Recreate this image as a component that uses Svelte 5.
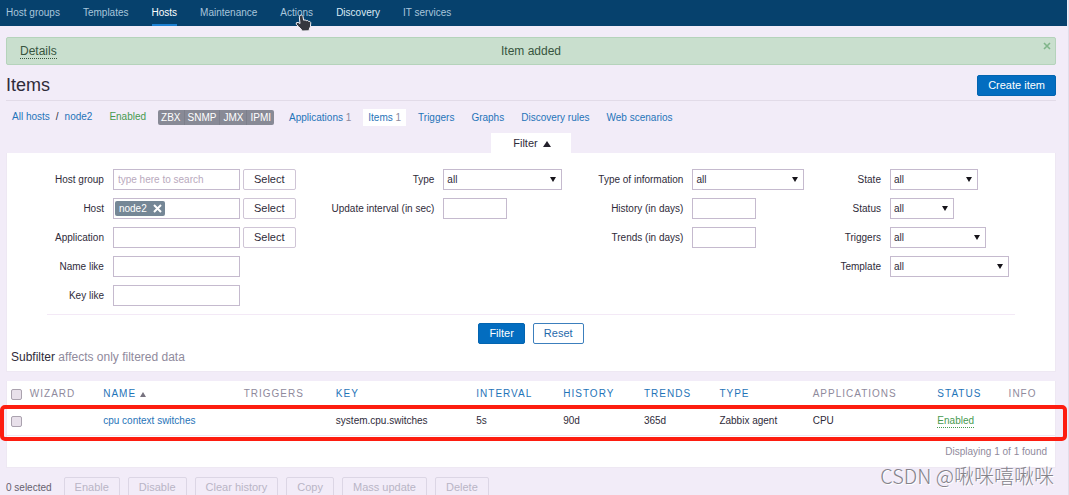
<script lang="ts">
	interface Field {
		id: string;
		label: string;
		type: 'text' | 'select';
		size: string;
		placeholder?: string;
		picker?: boolean;
		tag?: string;
	}

	interface Column {
		label: string;
		width: number;
		sortable?: boolean;
	}

	const menu = ['Host groups', 'Templates', 'Hosts', 'Maintenance', 'Actions', 'Discovery', 'IT services'];
	const interfaces = ['ZBX', 'SNMP', 'JMX', 'IPMI'];

	const tabs = [
		{ label: 'Applications', count: 1 },
		{ label: 'Items', count: 1 },
		{ label: 'Triggers' },
		{ label: 'Graphs' },
		{ label: 'Discovery rules' },
		{ label: 'Web scenarios' }
	];

	const filterColumns: Field[][] = [
		[
			{ id: 'group', label: 'Host group', type: 'text', size: 'wide', placeholder: 'type here to search', picker: true },
			{ id: 'host', label: 'Host', type: 'text', size: 'wide', picker: true, tag: 'node2' },
			{ id: 'application', label: 'Application', type: 'text', size: 'wide', picker: true },
			{ id: 'name', label: 'Name like', type: 'text', size: 'wide' },
			{ id: 'key', label: 'Key like', type: 'text', size: 'wide' }
		],
		[
			{ id: 'type', label: 'Type', type: 'select', size: 'xl' },
			{ id: 'interval', label: 'Update interval (in sec)', type: 'text', size: 'small' }
		],
		[
			{ id: 'value-type', label: 'Type of information', type: 'select', size: 'lg' },
			{ id: 'history', label: 'History (in days)', type: 'text', size: 'small' },
			{ id: 'trends', label: 'Trends (in days)', type: 'text', size: 'small' }
		],
		[
			{ id: 'state', label: 'State', type: 'select', size: 'sm' },
			{ id: 'status', label: 'Status', type: 'select', size: 'small' },
			{ id: 'triggers', label: 'Triggers', type: 'select', size: 'md' },
			{ id: 'template', label: 'Template', type: 'select', size: 'xl' }
		]
	];

	// widths in percent of the table
	const columns: Column[] = [
		{ label: 'Wizard', width: 7 },
		{ label: 'Name', width: 13.4, sortable: true },
		{ label: 'Triggers', width: 8.8 },
		{ label: 'Key', width: 13.4, sortable: true },
		{ label: 'Interval', width: 8.3, sortable: true },
		{ label: 'History', width: 7.7, sortable: true },
		{ label: 'Trends', width: 7.2, sortable: true },
		{ label: 'Type', width: 8.9, sortable: true },
		{ label: 'Applications', width: 11.9 },
		{ label: 'Status', width: 6.8, sortable: true },
		{ label: 'Info', width: 4.8 }
	];

	const items = [
		{
			name: 'cpu context switches',
			key: 'system.cpu.switches',
			interval: '5s',
			history: '90d',
			trends: '365d',
			type: 'Zabbix agent',
			applications: 'CPU',
			status: 'Enabled'
		}
	];

	const actions = ['Enable', 'Disable', 'Clear history', 'Copy', 'Mass update', 'Delete'];

	let selected = $state(items.map(() => false));
	let selectedCount = $derived(selected.filter(Boolean).length);
	let messageOpen = $state(true);
	let filterOpen = $state(true);

	function toggleAll(event: Event) {
		const checked = (event.currentTarget as HTMLInputElement).checked;
		selected = items.map(() => checked);
	}
</script>

<div class="page">
	<nav class="menu">
		{#each menu as entry}
			<a href="#top" class:active={entry === 'Hosts'} class:hover={entry === 'Discovery'}>
				{entry}
				{#if entry === 'Actions'}
					<svg class="pointer" width="17" height="18" viewBox="0 0 17 18" aria-hidden="true">
						<path
							d="M5.5 1.2c1.3-.5 2.3.2 2.5 1.4l.6 3.6 1.5-.3 1.1.7 1.5-.1.8.8 1.3.1 1 1.3-.4 4.1-1.1 2.2-.2 1.8-7.2.2-.4-1.5-3.2-3.1-2.1-2.2.2-1.5 1.7-.3 1.9 1.1-.7-6.7z"
							fill="#35373f"
							stroke="#f2f0f6"
							stroke-width="1"
							stroke-linejoin="round"
						/>
					</svg>
				{/if}
			</a>
		{/each}
	</nav>

	<main>
		{#if messageOpen}
			<div class="message" role="status">
				<a href="#details" class="dotted">Details</a>
				<span>Item added</span>
				<button type="button" class="close" aria-label="Close" onclick={() => (messageOpen = false)}>
					<svg width="8" height="8" viewBox="0 0 8 8"><path d="M1 1l6 6M7 1l-6 6" stroke="currentColor" stroke-width="1.6" /></svg>
				</button>
			</div>
		{/if}

		<header>
			<h1>Items</h1>
			<button type="button" class="btn primary">Create item</button>
		</header>

		<div class="crumbs">
			<span class="path"><a href="#hosts">All hosts</a><span>/</span><a href="#node2">node2</a></span>
			<span class="enabled">Enabled</span>
			<span class="interfaces">
				{#each interfaces as name}
					<span>{name}</span>
				{/each}
			</span>
			{#each tabs as tab}
				<span class="tab" class:current={tab.label === 'Items'}>
					<a href="#{tab.label}">{tab.label}</a>{#if tab.count}&nbsp;{tab.count}{/if}
				</span>
			{/each}
		</div>

		<div class="filter-tab">
			<button type="button" aria-expanded={filterOpen} onclick={() => (filterOpen = !filterOpen)}>
				Filter <span class="up"></span>
			</button>
		</div>

		<section class="panel filter">
			{#if filterOpen}
				<form onsubmit={(e) => e.preventDefault()}>
					<div class="fields">
						{#each filterColumns as column}
							<div class="column">
								{#each column as field}
									<label for={field.id}>{field.label}</label>
									<div class="control">
										{#if field.type === 'select'}
											<span class="select {field.size}">
												<select id={field.id}><option>all</option></select>
											</span>
										{:else}
											<span class="box {field.size}">
												{#if field.tag}
													<span class="tag">
														{field.tag}
														<button type="button" aria-label="Remove {field.tag}">
															<svg width="9" height="9" viewBox="0 0 9 9"><path d="M1 1l7 7M8 1L1 8" stroke="currentColor" stroke-width="2" /></svg>
														</button>
													</span>
												{/if}
												<input id={field.id} type="text" placeholder={field.placeholder} />
											</span>
										{/if}
										{#if field.picker}
											<button type="button" class="btn plain">Select</button>
										{/if}
									</div>
								{/each}
							</div>
						{/each}
					</div>
					<div class="submit">
						<button type="submit" class="btn primary">Filter</button>
						<button type="reset" class="btn">Reset</button>
					</div>
				</form>
			{/if}
			<p class="subfilter">Subfilter <span>affects only filtered data</span></p>
		</section>

		<section class="panel list">
			<table>
				<colgroup>
					<col style="width: 1.8%" />
					{#each columns as column}
						<col style="width: {column.width}%" />
					{/each}
				</colgroup>
				<thead>
					<tr>
						<th><input type="checkbox" aria-label="Select all" onchange={toggleAll} /></th>
						{#each columns as column}
							<th>
								{#if column.sortable}
									<a href="#sort">{column.label}</a>
								{:else}
									{column.label}
								{/if}
								{#if column.label === 'Name'}<span class="up"></span>{/if}
							</th>
						{/each}
					</tr>
				</thead>
				<tbody>
					{#each items as item, index}
						<tr>
							<td><input type="checkbox" aria-label={item.name} bind:checked={selected[index]} /></td>
							<td></td>
							<td><a href="#item">{item.name}</a></td>
							<td></td>
							<td>{item.key}</td>
							<td>{item.interval}</td>
							<td>{item.history}</td>
							<td>{item.trends}</td>
							<td>{item.type}</td>
							<td>{item.applications}</td>
							<td><a href="#status" class="enabled dotted">{item.status}</a></td>
							<td></td>
						</tr>
					{/each}
				</tbody>
			</table>
			<div class="total">Displaying {items.length} of {items.length} found</div>
			<div class="marker"></div>
		</section>

		<footer>
			<span class="count">{selectedCount} selected</span>
			{#each actions as action}
				<button type="button" class="btn" disabled={selectedCount === 0}>{action}</button>
			{/each}
			<span class="watermark">CSDN @啾咪嘻啾咪</span>
		</footer>
	</main>
</div>

<style>
	:global(body) {
		margin: 0;
		background: #f2ecf8;
	}

	.page {
		box-sizing: border-box;
		height: 100vh;
		overflow: hidden;
		border-right: 1px solid #e2dde9;
		background: #f2ecf8;
		color: #2f2b3a;
		font: 10px/16px 'Liberation Sans', Arial, sans-serif;
	}

	a {
		color: #1f74b8;
		text-decoration: none;
	}

	button,
	input,
	select {
		box-sizing: border-box;
		margin: 0;
		font: inherit;
		color: inherit;
	}

	/* Top menu */
	.menu {
		display: flex;
		gap: 23px;
		height: 26px;
		margin-right: 1px;
		padding-left: 6px;
		background: #06416d;
	}

	.menu a {
		position: relative;
		box-sizing: border-box;
		height: 26px;
		border-bottom: 2px solid transparent;
		line-height: 26px;
		color: #a9c6dc;
	}

	.menu a.active {
		border-color: #1c80d2;
		color: #fff;
	}

	.menu a.hover {
		color: #dcebf5;
	}

	.pointer {
		position: absolute;
		top: 14px;
		left: 15px;
	}

	main {
		padding: 11px 12px 0 6px;
	}

	/* Message */
	.message {
		position: relative;
		box-sizing: border-box;
		display: grid;
		grid-template-columns: 1fr auto 1fr;
		align-items: center;
		justify-items: start;
		height: 28px;
		padding: 0 13px;
		border: 1px solid #b5d3bb;
		border-radius: 2px;
		background: #c9dfce;
		color: #38553f;
		font-size: 12px;
		line-height: 14px;
	}

	.message a {
		color: inherit;
	}

	.dotted {
		border-bottom: 1px dotted currentColor;
	}

	.close {
		position: absolute;
		top: 4px;
		right: 4px;
		display: flex;
		padding: 0;
		border: 0;
		background: none;
		color: #80b58a;
	}

	/* Title */
	header {
		display: flex;
		align-items: center;
		justify-content: space-between;
		padding: 10px 0 4px;
		border-bottom: 1px solid #e2dbe8;
	}

	h1 {
		margin: 0;
		font-size: 18px;
		font-weight: normal;
		line-height: 21px;
	}

	.btn {
		height: 21px;
		padding: 0 10px;
		border: 1px solid #3c7fbd;
		border-radius: 2px;
		background: #fff;
		color: #1f69ab;
		font-size: 11px;
		line-height: 19px;
	}

	.btn.primary {
		border-color: #0364b0;
		background: #036dc0;
		color: #fff;
	}

	.btn.plain {
		border-color: #cfc5d6;
		color: #2f2b3a;
	}

	.btn:disabled {
		border-color: #dcd6e5;
		background: transparent;
		color: #b9b5c6;
	}

	/* Host navigation */
	.crumbs {
		display: flex;
		align-items: center;
		gap: 7px;
		height: 18px;
		padding: 7px 1px;
	}

	.path,
	.crumbs > .enabled {
		padding: 0 5px;
	}

	.path span {
		padding: 0 6px;
	}

	.enabled {
		color: #479a4f;
	}

	.interfaces {
		display: flex;
		overflow: hidden;
		margin-right: 3px;
		border-radius: 2px;
		background: #888a96;
		color: #fff;
		line-height: 15px;
	}

	.interfaces span {
		padding: 0 3px;
	}

	.interfaces span + span {
		border-left: 1px solid #7d7f8b;
	}

	.tab {
		padding: 0 5px;
		line-height: 17px;
		color: #8f8a9c;
	}

	.tab.current {
		background: #fff;
	}

	/* Filter */
	.filter-tab {
		display: flex;
		justify-content: center;
	}

	.filter-tab button {
		height: 20px;
		padding: 0 20px 0 22px;
		border: 0;
		background: #fff;
		font-size: 11px;
		line-height: 20px;
	}

	.up {
		display: inline-block;
		margin-left: 2px;
		border: solid transparent;
		border-width: 0 4px 6px;
		border-bottom-color: #24212c;
	}

	.panel {
		border: 1px solid #eee8f3;
		border-top: 0;
		background: #fff;
	}

	.filter {
		padding-top: 16px;
	}

	.fields {
		display: flex;
		justify-content: center;
		gap: 36px;
		margin: 0 40px;
		padding: 0 0 8px 2px;
		border-bottom: 1px solid #f3e9f6;
	}

	.column {
		display: grid;
		grid-template-columns: auto auto;
		grid-auto-rows: 21px;
		align-content: start;
		gap: 8px 9px;
	}

	.column label {
		text-align: right;
		line-height: 21px;
		white-space: nowrap;
	}

	.control {
		display: flex;
		gap: 3px;
	}

	.box,
	.select {
		position: relative;
		box-sizing: border-box;
		display: flex;
		align-items: center;
		height: 21px;
		border: 1px solid #c5bace;
		background: #fff;
	}

	.wide {
		width: 127px;
	}

	.small {
		width: 64px;
	}

	.sm {
		width: 88px;
	}

	.md {
		width: 96px;
	}

	.lg {
		width: 112px;
	}

	.xl {
		width: 119px;
	}

	.box input,
	.select select {
		flex: 1;
		min-width: 0;
		height: 19px;
		padding: 0 4px;
		border: 0;
		border-radius: 0;
		outline: 0;
		background: none;
		appearance: none;
	}

	.box input::placeholder {
		color: #b9a9bd;
	}

	.select select {
		padding: 0 3px;
	}

	.select::after {
		content: '';
		position: absolute;
		top: 7px;
		right: 5px;
		border: solid transparent;
		border-width: 5px 3px 0;
		border-top-color: #16141a;
		pointer-events: none;
	}

	.tag {
		display: flex;
		align-items: center;
		gap: 6px;
		margin-left: 1px;
		padding: 0 3px 0 4px;
		border-radius: 2px;
		background: #758796;
		color: #fff;
		line-height: 15px;
	}

	.tag button {
		display: flex;
		padding: 0;
		border: 0;
		background: none;
	}

	.submit {
		display: flex;
		justify-content: center;
		gap: 8px;
		padding-top: 8px;
	}

	.subfilter {
		margin: 0;
		padding: 5px 4px 6px;
		font-size: 12px;
	}

	.subfilter span,
	.total {
		color: #8f8a9c;
	}

	/* Items table */
	.list {
		position: relative;
		margin-top: 9px;
	}

	table {
		width: 100%;
		border-collapse: collapse;
		table-layout: fixed;
	}

	th,
	td {
		height: 26px;
		padding: 0 0 0 4px;
		text-align: left;
		white-space: nowrap;
	}

	th {
		color: #8f8a9c;
		font-weight: normal;
		letter-spacing: 1px;
		text-transform: uppercase;
	}

	td {
		height: 28px;
	}

	th .up {
		margin-left: 0;
		border-width: 0 3px 5px;
		border-bottom-color: #77727f;
	}

	tbody tr {
		border-bottom: 1px solid #eee8f3;
	}

	td .dotted {
		display: inline-block;
		line-height: 12px;
	}

	input[type='checkbox'] {
		display: block;
		width: 11px;
		height: 11px;
		border: 1px solid #aaa2ae;
		border-radius: 2px;
		background: #e8e0ea;
		appearance: none;
	}

	input[type='checkbox']:checked {
		background: #1f74b8;
	}

	.total {
		padding: 8px 8px 7px 0;
		text-align: right;
	}

	.marker {
		position: absolute;
		top: 24px;
		right: -12px;
		left: -7px;
		height: 28px;
		border: 4px solid #fd1d10;
		border-radius: 5px;
		pointer-events: none;
	}

	/* Bulk actions */
	footer {
		position: relative;
		display: flex;
		gap: 8px;
		padding-top: 9px;
	}

	.count {
		padding-right: 4px;
		line-height: 21px;
		color: #66616f;
	}

	.watermark {
		position: absolute;
		top: -5px;
		right: 2px;
		color: #85838b;
		font: 300 20px/26px 'Noto Sans CJK SC', sans-serif;
		text-shadow: 1px 1px 0 #fff;
	}
</style>
